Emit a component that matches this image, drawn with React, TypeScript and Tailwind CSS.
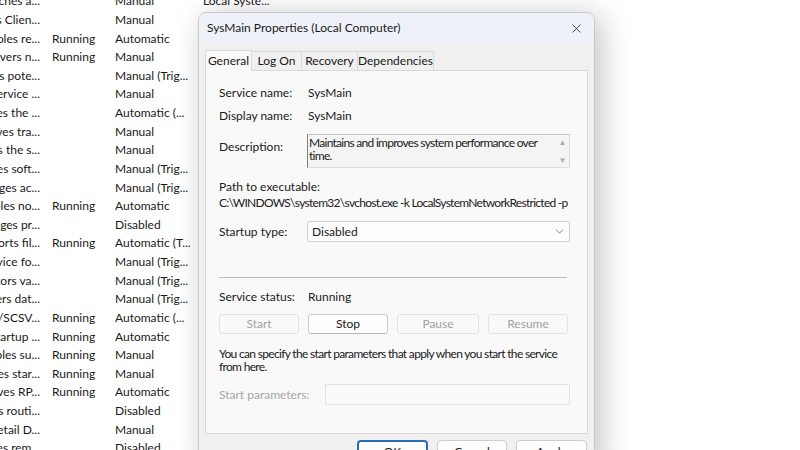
import { ChevronDown, X } from "lucide-react";

type Row = { desc: string; status: string; startup: string; logon?: string };

const rows: Row[] = [
  { desc: "Launches a...", status: "", startup: "Manual", logon: "Local Syste..." },
  { desc: "Windows Clien...", status: "", startup: "Manual" },
  { desc: "Enables re...", status: "Running", startup: "Automatic" },
  { desc: "Delivers n...", status: "Running", startup: "Manual" },
  { desc: "Analyzes pote...", status: "", startup: "Manual (Trig..." },
  { desc: "This service ...", status: "", startup: "Manual" },
  { desc: "Provides the ...", status: "", startup: "Automatic (..." },
  { desc: "Saves tra...", status: "", startup: "Manual" },
  { desc: "Verifies the s...", status: "", startup: "Manual" },
  { desc: "Enables soft...", status: "", startup: "Manual (Trig..." },
  { desc: "Manages ac...", status: "", startup: "Manual (Trig..." },
  { desc: "Enables no...", status: "Running", startup: "Automatic" },
  { desc: "Manages pr...", status: "", startup: "Disabled" },
  { desc: "Supports fil...", status: "Running", startup: "Automatic (T..." },
  { desc: "Service fo...", status: "", startup: "Manual (Trig..." },
  { desc: "Monitors va...", status: "", startup: "Manual (Trig..." },
  { desc: "Gathers dat...", status: "", startup: "Manual (Trig..." },
  { desc: "SSTP/SCSV...", status: "Running", startup: "Automatic (..." },
  { desc: "The startup ...", status: "Running", startup: "Automatic" },
  { desc: "Enables su...", status: "Running", startup: "Manual" },
  { desc: "Handles star...", status: "Running", startup: "Manual" },
  { desc: "Serves RP...", status: "Running", startup: "Automatic" },
  { desc: "Performs routi...", status: "", startup: "Disabled" },
  { desc: "The Retail D...", status: "", startup: "Manual" },
  { desc: "Manages rem...", status: "", startup: "Disabled" },
];

function ActionButton({ label, enabled, width }: { label: string; enabled?: boolean; width: string }) {
  return (
    <div
      className={`${width} h-[20px] flex items-center justify-center rounded-[3px] border ${
        enabled
          ? "border-[#cdcdcd] border-b-[#b8b8b8] bg-[#fdfdfd] text-[#1b1b1b]"
          : "border-[#e3e3e3] bg-[#f9f9f9] text-[#a3a3a3]"
      }`}
    >
      {label}
    </div>
  );
}

export default function App() {
  return (
    <div
      className="relative w-[800px] h-[450px] overflow-hidden bg-white text-[12px] text-[#1a1a1a]"
      style={{ fontFamily: 'Lato, "Open Sans", sans-serif' }}
    >
      {/* services list behind the dialog */}
      <div className="flex flex-col -mt-[8px]">
        {rows.map((r, i) => (
          <div key={i} className="flex h-[18.625px] items-center whitespace-nowrap">
            <div className="w-[40px] shrink-0 flex justify-end overflow-hidden">
              <span className="shrink-0">{r.desc}</span>
            </div>
            <div className="w-[75px] shrink-0 pl-[12px]">{r.status}</div>
            <div className="w-[88px] shrink-0">{r.startup}</div>
            <div className="shrink-0">{r.logon}</div>
          </div>
        ))}
      </div>

      {/* SysMain Properties dialog */}
      <div className="absolute left-[198px] top-[12px] w-[397px] h-[460px] rounded-[8px] border border-[#c9c9c9] bg-[#f0f0f0] shadow-[6px_4px_30px_rgba(0,0,0,0.24)] overflow-hidden">
        <div className="h-[30px] flex items-center justify-between pl-[8px] pr-[10px] bg-[#eef2f8]">
          <span className="text-[12px]">SysMain Properties (Local Computer)</span>
          <X className="w-[15px] h-[15px] text-[#222]" strokeWidth={1.3} />
        </div>

        <div className="px-[6px] pt-[6px]">
          {/* tabs */}
          <div className="flex items-end h-[21px]">
            <div className="w-[47px] h-[21px] flex items-center justify-center border border-b-0 border-[#d9d9d9] bg-[#f9f9f9] relative z-10 -mb-px">
              General
            </div>
            <div className="w-[50px] h-[19px] flex items-center justify-center border border-l-0 border-b-0 border-[#d9d9d9] bg-[#f0f0f0]">Log On</div>
            <div className="w-[56px] h-[19px] flex items-center justify-center border border-l-0 border-b-0 border-[#d9d9d9] bg-[#f0f0f0]">Recovery</div>
            <div className="w-[76px] h-[19px] flex items-center justify-center border border-l-0 border-b-0 border-[#d9d9d9] bg-[#f0f0f0]">Dependencies</div>
          </div>

          {/* tab panel */}
          <div className="h-[364px] border border-[#d9d9d9] bg-[#f9f9f9] pl-[13px] pr-[17px] pt-[13px]">
            <div className="flex h-[18px] items-center">
              <span className="w-[89px]">Service name:</span>
              <span>SysMain</span>
            </div>
            <div className="flex h-[18px] items-center mt-[5px]">
              <span className="w-[89px]">Display name:</span>
              <span>SysMain</span>
            </div>

            <div className="flex mt-[9px] items-start">
              <span className="w-[88px] pt-[4px]">Description:</span>
              <div className="flex-1 h-[34px] flex border border-[#dedede] border-l-[#7d7d7d] border-t-[#c4c4c4] bg-[#f4f4f4]">
                <div className="flex-1 pl-[1px] leading-[13px] pt-[1px] tracking-[-0.72px]">
                  Maintains and improves system performance over time.
                </div>
                <div className="w-[13px] flex flex-col items-center justify-between py-[3px] text-[#ababab] text-[8px] leading-[8px]">
                  <span>▲</span>
                  <span>▼</span>
                </div>
              </div>
            </div>

            <div className="mt-[11px] leading-[16px]">Path to executable:</div>
            <div className="leading-[16px] whitespace-nowrap tracking-[-0.72px]">
              C:\WINDOWS\system32\svchost.exe -k LocalSystemNetworkRestricted -p
            </div>

            <div className="flex items-center mt-[10px]">
              <span className="w-[88px]">Startup type:</span>
              <div className="flex-1 h-[21px] flex items-center justify-between pl-[4px] pr-[3px] border border-[#cfcfcf] rounded-[2px] bg-[#fdfdfd]">
                <span>Disabled</span>
                <ChevronDown className="w-[13px] h-[13px] text-[#555]" strokeWidth={1.3} />
              </div>
            </div>

            <div className="mt-[35px] h-[2px] border-t border-[#bdbdbd] border-b-[#ffffff] mr-[3px]" />

            <div className="flex h-[18px] items-center mt-[9px]">
              <span className="w-[89px]">Service status:</span>
              <span>Running</span>
            </div>

            <div className="flex gap-[9px] mt-[8px]">
              <ActionButton label="Start" width="w-[80px]" />
              <ActionButton label="Stop" width="w-[80px]" enabled />
              <ActionButton label="Pause" width="w-[82px]" />
              <ActionButton label="Resume" width="w-[80px]" />
            </div>

            <div className="mt-[13px] leading-[13px] tracking-[-0.68px]">
              You can specify the start parameters that apply when you start the service from here.
            </div>

            <div className="flex items-center mt-[11px]">
              <span className="w-[106px] text-[#a5a5a5]">Start parameters:</span>
              <div className="flex-1 h-[21px] border border-[#e3e3e3] bg-[#f9f9f9]" />
            </div>
          </div>

          {/* dialog buttons */}
          <div className="flex justify-end gap-[9px] mt-[6px] pr-[1px]">
            <div className="w-[71px] h-[23px] flex items-center justify-center rounded-[4px] border-2 border-[#2b6cb5] bg-[#fdfdfd]">OK</div>
            <div className="w-[70px] h-[23px] flex items-center justify-center rounded-[4px] border border-[#cdcdcd] bg-[#fdfdfd]">Cancel</div>
            <div className="w-[71px] h-[23px] flex items-center justify-center rounded-[4px] border border-[#cdcdcd] bg-[#fdfdfd]">Apply</div>
          </div>
        </div>
      </div>
    </div>
  );
}
